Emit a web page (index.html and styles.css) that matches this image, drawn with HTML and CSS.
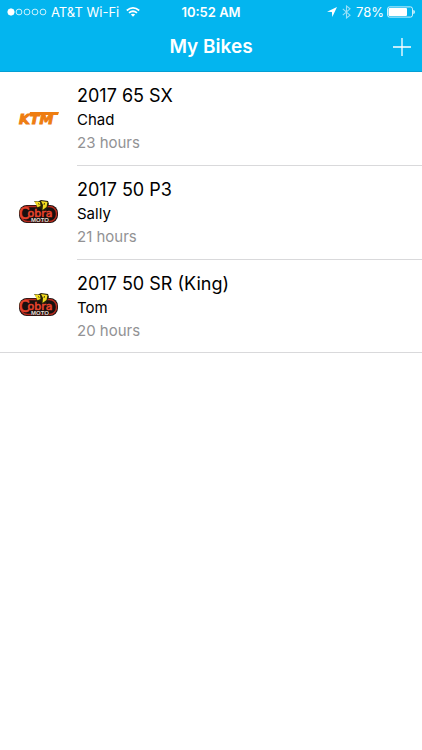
FILE: index.html
```html
<!DOCTYPE html>
<html lang="en">
<head>
<meta charset="utf-8">
<meta name="viewport" content="width=device-width, initial-scale=1">
<title>My Bikes</title>
<link rel="stylesheet" href="styles.css">
</head>
<body>
<header class="header">
  <div class="status">
    <div class="status-side">
      <svg class="signal" width="40" height="8" viewBox="0 0 40 8" fill="none" stroke="#fff" stroke-width=".8" aria-hidden="true">
        <circle cx="4" cy="4" r="3.2" fill="#fff"/><circle cx="12" cy="4" r="2.9"/><circle cx="20" cy="4" r="2.9"/><circle cx="28" cy="4" r="2.9"/><circle cx="36" cy="4" r="2.9"/>
      </svg>
      <span>AT&amp;T Wi-Fi</span>
      <svg class="wifi" width="14" height="10" viewBox="0 0 14 10" fill="none" stroke="#fff" stroke-width="1.7" aria-hidden="true">
        <path d="M.8 3.5Q7-1.7 13.2 3.5M3 5.9Q7 2.6 11 5.9"/><path d="M4.8 7.5Q7 5.8 9.2 7.5L7 9.8z" fill="#fff" stroke="none"/>
      </svg>
    </div>
    <time class="clock">10:52 AM</time>
    <div class="status-side status-right">
      <svg width="10" height="10" viewBox="0 0 10 10" aria-hidden="true"><path d="M10 0L5.3 10 4.9 5.1 0 4.7z" fill="#fff"/></svg>
      <svg class="bluetooth" width="9" height="14" viewBox="0 0 9 14" fill="none" stroke="#fff" stroke-width="1.1" aria-hidden="true"><path d="M.8 3.8l7.2 6.4L4.5 13V1L8 3.8.8 10.2"/></svg>
      <span>78%</span>
      <svg class="battery" width="28" height="12" viewBox="0 0 28 12" aria-hidden="true"><rect x=".5" y=".9" width="25" height="10.2" rx="2" fill="none" stroke="#fff" stroke-width=".8"/><rect x="1.5" y="2" width="18.5" height="8" rx="1" fill="#fff"/><path d="M26.4 4q1.4 0 1.4 2t-1.4 2z" fill="#fff"/></svg>
    </div>
  </div>
  <div class="navbar">
    <h1>My Bikes</h1>
    <button class="add" type="button" aria-label="Add bike"><svg width="18" height="18" viewBox="0 0 18 18" aria-hidden="true"><path d="M9 0v18M0 9h18" stroke="#fff" stroke-width="1.3"/></svg></button>
  </div>
</header>
<main>
  <ul class="bikes">
    <li class="bike">
      <svg class="logo" width="42" height="30" viewBox="0 0 42 30" role="img" aria-label="KTM">
        <text class="ktm" x="2" y="20">KTM</text>
        <path d="M13 8h29l-1 3H12z" fill="#ee7d11"/>
      </svg>
      <div class="details"><h2>2017 65 SX</h2><p class="rider">Chad</p><p class="hours">23 hours</p></div>
    </li>
    <li class="bike">
      <svg class="logo" width="42" height="30" viewBox="0 0 42 30" role="img" aria-label="Cobra Moto">
        <rect x="2" y="7" width="39" height="18" rx="8" fill="#17100f"/>
        <rect x="3.500" y="8.500" width="36" height="15" rx="7" fill="none" stroke="#b5291d" stroke-width="1.5"/>
        <path d="M17 3l4 .5L24 2l7 1 1 3-3 6-4 1-2-3-4 1 1-4z" fill="#242009"/>
        <path d="M17.500 3.500l5.500.5.5 4-3 1.200zM24 3l6.500 1-1 5-4 3 .5-5z" fill="#f2dc20"/>
        <path d="M21 5.500l1.500 1M27.500 5l-.5 2" stroke="#242009" stroke-width=".8"/>
        <text class="cobra-name" x="2" y="21"><tspan class="cobra-initial">C</tspan><tspan dx="-2" dy="-2">obra</tspan></text>
        <text class="cobra-moto" x="14" y="24">MOTO</text>
      </svg>
      <div class="details"><h2>2017 50 P3</h2><p class="rider">Sally</p><p class="hours">21 hours</p></div>
    </li>
    <li class="bike">
      <svg class="logo" width="42" height="30" viewBox="0 0 42 30" role="img" aria-label="Cobra Moto">
        <rect x="2" y="7" width="39" height="18" rx="8" fill="#17100f"/>
        <rect x="3.500" y="8.500" width="36" height="15" rx="7" fill="none" stroke="#b5291d" stroke-width="1.5"/>
        <path d="M17 3l4 .5L24 2l7 1 1 3-3 6-4 1-2-3-4 1 1-4z" fill="#242009"/>
        <path d="M17.500 3.500l5.500.5.5 4-3 1.200zM24 3l6.500 1-1 5-4 3 .5-5z" fill="#f2dc20"/>
        <path d="M21 5.500l1.500 1M27.500 5l-.5 2" stroke="#242009" stroke-width=".8"/>
        <text class="cobra-name" x="2" y="21"><tspan class="cobra-initial">C</tspan><tspan dx="-2" dy="-2">obra</tspan></text>
        <text class="cobra-moto" x="14" y="24">MOTO</text>
      </svg>
      <div class="details"><h2>2017 50 SR (King)</h2><p class="rider">Tom</p><p class="hours">20 hours</p></div>
    </li>
  </ul>
</main>
</body>
</html>
```
FILE: styles.css
```css
* { box-sizing: border-box; }
body { margin: 0; background: #fff; color: #000; font-family: Inter, "Liberation Sans", sans-serif; }
svg { display: block; flex: none; }
h1, h2, p, ul { margin: 0; padding: 0; font-weight: 400; }
.header { background: #03b5ef; color: #fff; border-bottom: 1px solid #049fd3; }
.status { display: grid; grid-template-columns: 1fr auto 1fr; align-items: center; height: 23px; padding: 0 7px; font-size: 13px; line-height: 16px; }
.status-side { display: flex; align-items: center; gap: 4px; }
.status-right { justify-content: flex-end; gap: 5px; }
.status-right .battery { margin-left: -2px; }
.bluetooth { opacity: .6; }
.wifi { margin-left: 3px; }
.clock { font-weight: 600; }
.navbar { display: grid; grid-template-columns: 1fr auto 1fr; align-items: center; height: 48px; padding: 0 11px; }
.navbar h1 { grid-column: 2; font-size: 19px; line-height: 24px; font-weight: 600; }
.add { justify-self: end; padding: 0; border: 0; background: none; cursor: pointer; }
.bikes { list-style: none; border-bottom: 1px solid #d9d9db; }
.bike { display: flex; align-items: center; gap: 18px; padding-left: 17px; }
.details { flex: 1; height: 94px; padding-top: 12px; border-bottom: 1px solid #d9d9db; }
.bike:last-child .details { height: 92px; border-bottom: 0; }
.details h2 { font-size: 18px; line-height: 24px; }
.rider, .hours { font-size: 15px; line-height: 23px; }
.hours { color: #929294; }
.ktm { font: italic 900 14px "DejaVu Sans", sans-serif; fill: #ee7d11; stroke: #ee7d11; stroke-width: 1px; }
.cobra-name { font: 400 11px "DejaVu Sans", sans-serif; fill: #e5432c; stroke: #e5432c; stroke-width: .6px; }
.cobra-initial { font-size: 15px; }
.cobra-moto { font: 700 6px "Liberation Sans", sans-serif; fill: #e6ddd5; stroke: #17100f; stroke-width: 1px; paint-order: stroke; }
```
